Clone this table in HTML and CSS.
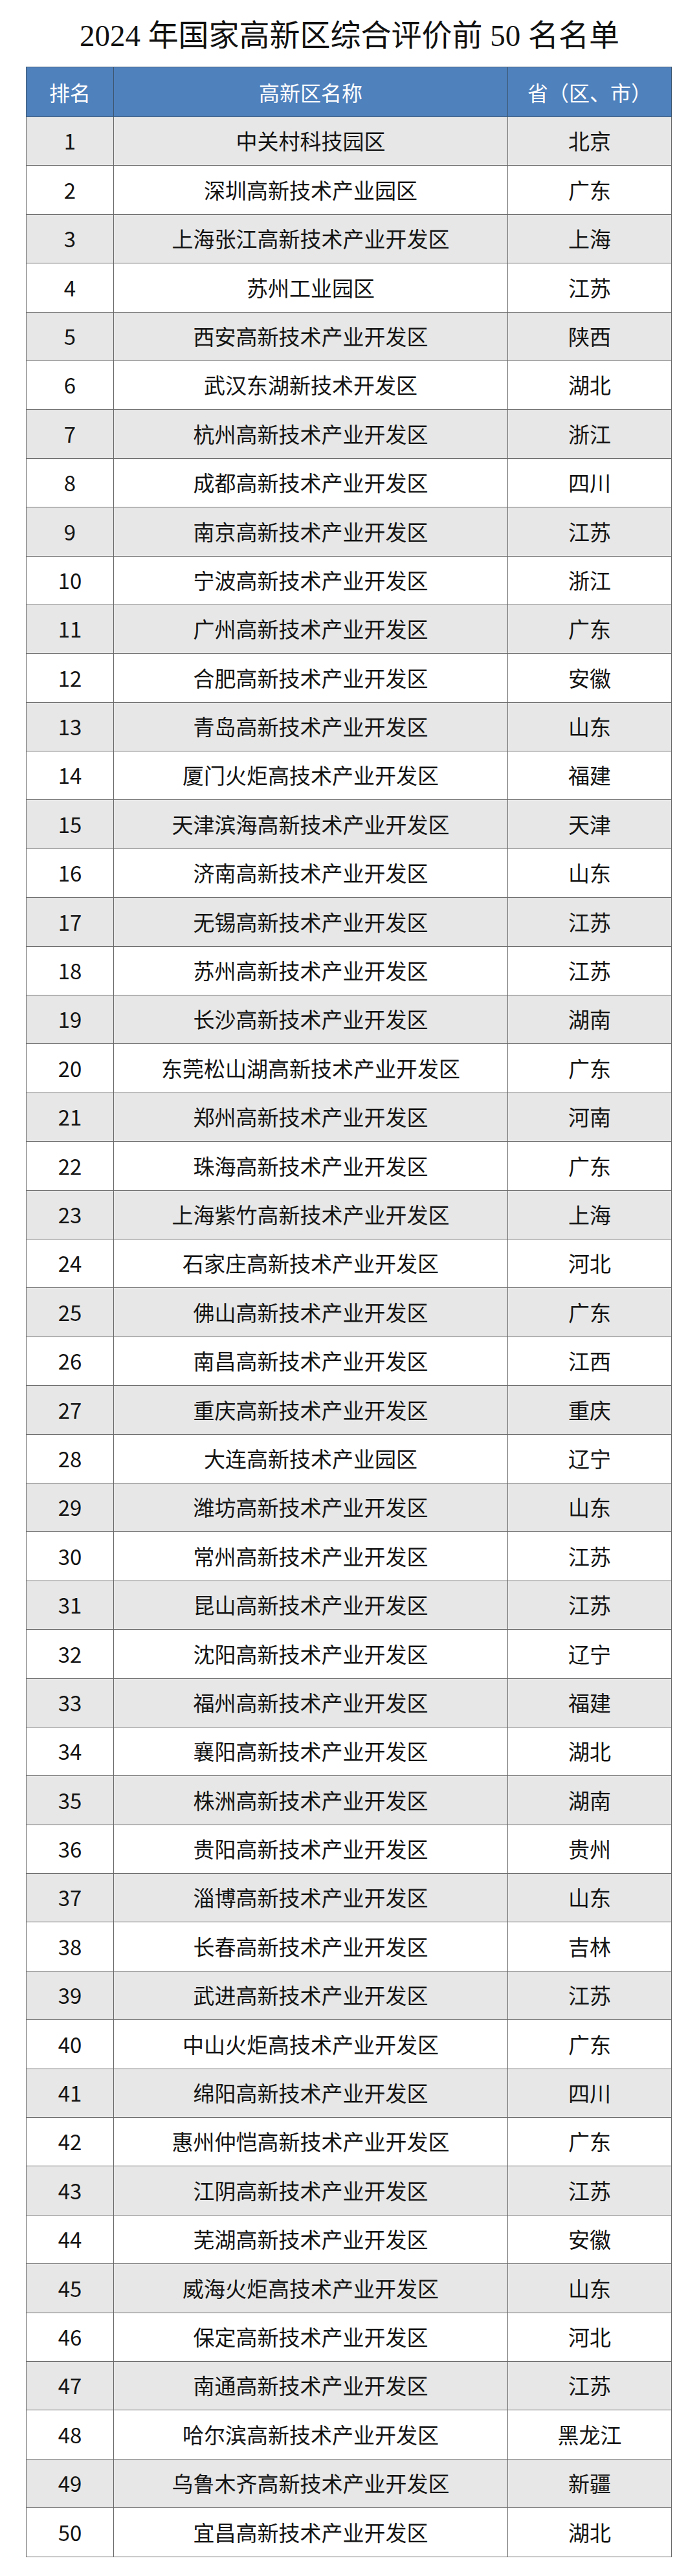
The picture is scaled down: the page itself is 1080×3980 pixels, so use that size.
FILE: index.html
```html
<!DOCTYPE html>
<html lang="zh-CN">
<head>
<meta charset="utf-8">
<title>2024年国家高新区综合评价前50名名单</title>
<link rel="stylesheet" href="styles.css">
</head>
<body>
<h1 class="title">2024 年国家高新区综合评价前 50 名名单</h1>
<table class="rank">
<colgroup><col class="c1"><col class="c2"><col class="c3"></colgroup>
<thead>
<tr><th>排名</th><th>高新区名称</th><th>省（区、市）</th></tr>
</thead>
<tbody>
<tr><td>1</td><td>中关村科技园区</td><td>北京</td></tr>
<tr><td>2</td><td>深圳高新技术产业园区</td><td>广东</td></tr>
<tr><td>3</td><td>上海张江高新技术产业开发区</td><td>上海</td></tr>
<tr><td>4</td><td>苏州工业园区</td><td>江苏</td></tr>
<tr><td>5</td><td>西安高新技术产业开发区</td><td>陕西</td></tr>
<tr><td>6</td><td>武汉东湖新技术开发区</td><td>湖北</td></tr>
<tr><td>7</td><td>杭州高新技术产业开发区</td><td>浙江</td></tr>
<tr><td>8</td><td>成都高新技术产业开发区</td><td>四川</td></tr>
<tr><td>9</td><td>南京高新技术产业开发区</td><td>江苏</td></tr>
<tr><td>10</td><td>宁波高新技术产业开发区</td><td>浙江</td></tr>
<tr><td>11</td><td>广州高新技术产业开发区</td><td>广东</td></tr>
<tr><td>12</td><td>合肥高新技术产业开发区</td><td>安徽</td></tr>
<tr><td>13</td><td>青岛高新技术产业开发区</td><td>山东</td></tr>
<tr><td>14</td><td>厦门火炬高技术产业开发区</td><td>福建</td></tr>
<tr><td>15</td><td>天津滨海高新技术产业开发区</td><td>天津</td></tr>
<tr><td>16</td><td>济南高新技术产业开发区</td><td>山东</td></tr>
<tr><td>17</td><td>无锡高新技术产业开发区</td><td>江苏</td></tr>
<tr><td>18</td><td>苏州高新技术产业开发区</td><td>江苏</td></tr>
<tr><td>19</td><td>长沙高新技术产业开发区</td><td>湖南</td></tr>
<tr><td>20</td><td>东莞松山湖高新技术产业开发区</td><td>广东</td></tr>
<tr><td>21</td><td>郑州高新技术产业开发区</td><td>河南</td></tr>
<tr><td>22</td><td>珠海高新技术产业开发区</td><td>广东</td></tr>
<tr><td>23</td><td>上海紫竹高新技术产业开发区</td><td>上海</td></tr>
<tr><td>24</td><td>石家庄高新技术产业开发区</td><td>河北</td></tr>
<tr><td>25</td><td>佛山高新技术产业开发区</td><td>广东</td></tr>
<tr><td>26</td><td>南昌高新技术产业开发区</td><td>江西</td></tr>
<tr><td>27</td><td>重庆高新技术产业开发区</td><td>重庆</td></tr>
<tr><td>28</td><td>大连高新技术产业园区</td><td>辽宁</td></tr>
<tr><td>29</td><td>潍坊高新技术产业开发区</td><td>山东</td></tr>
<tr><td>30</td><td>常州高新技术产业开发区</td><td>江苏</td></tr>
<tr><td>31</td><td>昆山高新技术产业开发区</td><td>江苏</td></tr>
<tr><td>32</td><td>沈阳高新技术产业开发区</td><td>辽宁</td></tr>
<tr><td>33</td><td>福州高新技术产业开发区</td><td>福建</td></tr>
<tr><td>34</td><td>襄阳高新技术产业开发区</td><td>湖北</td></tr>
<tr><td>35</td><td>株洲高新技术产业开发区</td><td>湖南</td></tr>
<tr><td>36</td><td>贵阳高新技术产业开发区</td><td>贵州</td></tr>
<tr><td>37</td><td>淄博高新技术产业开发区</td><td>山东</td></tr>
<tr><td>38</td><td>长春高新技术产业开发区</td><td>吉林</td></tr>
<tr><td>39</td><td>武进高新技术产业开发区</td><td>江苏</td></tr>
<tr><td>40</td><td>中山火炬高技术产业开发区</td><td>广东</td></tr>
<tr><td>41</td><td>绵阳高新技术产业开发区</td><td>四川</td></tr>
<tr><td>42</td><td>惠州仲恺高新技术产业开发区</td><td>广东</td></tr>
<tr><td>43</td><td>江阴高新技术产业开发区</td><td>江苏</td></tr>
<tr><td>44</td><td>芜湖高新技术产业开发区</td><td>安徽</td></tr>
<tr><td>45</td><td>威海火炬高技术产业开发区</td><td>山东</td></tr>
<tr><td>46</td><td>保定高新技术产业开发区</td><td>河北</td></tr>
<tr><td>47</td><td>南通高新技术产业开发区</td><td>江苏</td></tr>
<tr><td>48</td><td>哈尔滨高新技术产业开发区</td><td>黑龙江</td></tr>
<tr><td>49</td><td>乌鲁木齐高新技术产业开发区</td><td>新疆</td></tr>
<tr><td>50</td><td>宜昌高新技术产业开发区</td><td>湖北</td></tr>
</tbody>
</table>
</body>
</html>
```
FILE: styles.css
```css
html, body {
  margin: 0;
  padding: 0;
  background: #ffffff;
}

body {
  width: 1080px;
}

.title {
  margin: 0;
  height: 103px;
  display: flex;
  align-items: center;
  justify-content: center;
  padding-bottom: 2px;
  box-sizing: border-box;
  font-family: "Liberation Serif", "Noto Sans CJK SC", serif;
  font-weight: normal;
  font-size: 47px;
  color: #111111;
  letter-spacing: 0;
}

.rank {
  margin-left: 40px;
  width: 997px;
  border-collapse: collapse;
  table-layout: fixed;
  font-family: "Noto Sans CJK SC", "Noto Sans", sans-serif;
  font-size: 33px;
  color: #141414;
}

.c1 { width: 135px; }
.c2 { width: 609px; }
.c3 { width: 253px; }

.rank th,
.rank td {
  padding: 0;
  text-align: center;
  vertical-align: middle;
  border: 1.5px solid #6a6a6a;
  line-height: 1.2;
}

.rank thead th {
  height: 76px;
  background: #4f81bd;
  color: #ffffff;
  font-weight: normal;
  font-size: 32px;
  border-color: #3d5670;
}

.rank tbody td {
  height: 75.4px;
  box-sizing: border-box;
}

.rank tbody tr:nth-child(odd) td {
  background: #e7e7e7;
}

.rank tbody tr:nth-child(even) td {
  background: #ffffff;
}
```
